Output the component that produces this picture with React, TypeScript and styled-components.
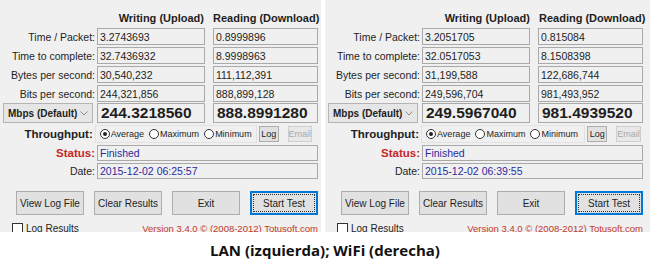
import React from 'react';
import styled, { createGlobalStyle } from 'styled-components';

const Global = createGlobalStyle`
  html, body {
    margin: 0;
    padding: 0;
    background: #ffffff;
  }
  body {
    font-family: 'Liberation Sans', Arial, sans-serif;
  }
`;

const Page = styled.div`
  width: 650px;
  height: 276px;
  display: flex;
  flex-direction: column;
  background: #ffffff;
  overflow: hidden;
`;

const Panels = styled.div`
  display: flex;
  gap: 4px;
  height: 232px;
`;

const Panel = styled.div<{ $width: number }>`
  width: ${(p) => p.$width}px;
  height: 232px;
  background: #f0f0f0;
  overflow: hidden;
  padding-top: 10px;
  box-sizing: border-box;
  display: flex;
  flex-direction: column;
  font-size: 10.5px;
  color: #1e1e1e;
`;

const Row = styled.div<{ $h: number; $top?: number }>`
  display: flex;
  align-items: center;
  height: ${(p) => p.$h}px;
  margin-top: ${(p) => p.$top ?? 2}px;
  flex-shrink: 0;
`;

const Label = styled.div<{ $bold?: boolean; $red?: boolean }>`
  width: 95px;
  margin-right: 2px;
  text-align: right;
  white-space: nowrap;
  font-weight: ${(p) => (p.$bold ? 700 : 400)};
  font-size: ${(p) => (p.$bold ? '11.5px' : '10.5px')};
  color: ${(p) => (p.$red ? '#c62828' : '#1e1e1e')};
`;

const ColHead = styled.div<{ $w: number; $align: 'left' | 'right' }>`
  width: ${(p) => p.$w}px;
  text-align: ${(p) => p.$align};
  font-weight: 700;
  font-size: 11px;
  white-space: nowrap;
  padding-left: ${(p) => (p.$align === 'left' ? '1px' : '0')};
  box-sizing: border-box;
`;

const Box = styled.div<{ $w: number; $big?: boolean; $blue?: boolean }>`
  width: ${(p) => p.$w}px;
  height: 100%;
  box-sizing: border-box;
  border: 1px solid #a9a9a9;
  background: #f0f0f0;
  display: flex;
  align-items: center;
  padding-left: ${(p) => (p.$big ? '3px' : '2px')};
  white-space: nowrap;
  overflow: hidden;
  font-weight: ${(p) => (p.$big ? 700 : 400)};
  font-size: ${(p) => (p.$big ? '15.5px' : '10.5px')};
  color: ${(p) => (p.$blue ? '#2b2b9e' : '#1e1e1e')};
`;

const Spacer = styled.div<{ $w: number }>`
  width: ${(p) => p.$w}px;
  flex-shrink: 0;
`;

const Select = styled.div`
  width: 90px;
  height: 100%;
  margin-left: 3px;
  margin-right: 4px;
  box-sizing: border-box;
  border: 1px solid #b4b4b4;
  background: #e6e6e6;
  display: flex;
  align-items: center;
  justify-content: space-between;
  padding: 0 4px;
  font-weight: 700;
  font-size: 10px;
  white-space: nowrap;
`;

const Caret = styled.svg`
  width: 8px;
  height: 5px;
  flex-shrink: 0;
`;

const RadioGroup = styled.div`
  width: 166px;
  height: 100%;
  box-sizing: border-box;
  border: 1px solid #e2e2e2;
  display: flex;
  align-items: center;
  gap: 5px;
  padding-left: 4px;
  margin-right: 2px;
  overflow: hidden;
`;

const RadioItem = styled.label`
  display: flex;
  align-items: center;
  gap: 1px;
  white-space: nowrap;
  font-size: 9px;
`;

const RadioDot = styled.span<{ $on?: boolean }>`
  width: 10px;
  height: 10px;
  box-sizing: border-box;
  border-radius: 50%;
  border: 1px solid #333333;
  background: #ffffff;
  display: flex;
  align-items: center;
  justify-content: center;
  &::after {
    content: '';
    width: 4px;
    height: 4px;
    border-radius: 50%;
    background: ${(p) => (p.$on ? '#222222' : 'transparent')};
  }
`;

const SmallButton = styled.div<{ $disabled?: boolean }>`
  width: ${(p) => (p.$disabled ? '25px' : '20px')};
  height: 16px;
  box-sizing: border-box;
  border: 1px solid ${(p) => (p.$disabled ? '#cfcfcf' : '#adadad')};
  background: ${(p) => (p.$disabled ? '#e8e8e8' : '#e1e1e1')};
  color: ${(p) => (p.$disabled ? '#a8a8a8' : '#1e1e1e')};
  display: flex;
  align-items: center;
  justify-content: center;
  font-size: 9px;
  margin-right: 9px;
  overflow: hidden;
`;

const ButtonRow = styled.div`
  display: flex;
  gap: 10px;
  margin-top: 12px;
  margin-left: 16px;
  height: 24px;
  flex-shrink: 0;
`;

const Button = styled.div<{ $focused?: boolean }>`
  width: 68px;
  height: 24px;
  box-sizing: border-box;
  border: 1px solid ${(p) => (p.$focused ? '#0078d7' : '#adadad')};
  box-shadow: ${(p) => (p.$focused ? 'inset 0 0 0 1px #0078d7' : 'none')};
  background: #e1e1e1;
  display: flex;
  align-items: center;
  justify-content: center;
  font-size: 10px;
  white-space: nowrap;
  position: relative;
  &::after {
    content: '';
    display: ${(p) => (p.$focused ? 'block' : 'none')};
    position: absolute;
    inset: 2px;
    border: 1px dotted #333333;
  }
`;

const Footer = styled.div`
  display: flex;
  align-items: center;
  justify-content: space-between;
  margin-top: 7px;
  margin-left: 12px;
  width: 306px;
  height: 12px;
  flex-shrink: 0;
`;

const CheckLabel = styled.div`
  display: flex;
  align-items: center;
  gap: 3px;
  font-size: 10px;
`;

const CheckBox = styled.span`
  width: 11px;
  height: 11px;
  box-sizing: border-box;
  border: 1px solid #333333;
  background: #ffffff;
`;

const Version = styled.div`
  color: #c0392b;
  font-size: 9.5px;
  white-space: nowrap;
`;

const Caption = styled.div`
  flex: 1;
  display: flex;
  justify-content: center;
  padding-top: 8px;
  font-family: 'Open Sans', 'Noto Sans', sans-serif;
  font-weight: 700;
  font-size: 15px;
  color: #111111;
`;

type Result = {
  width: number;
  rows: [string, string, string][];
  writeMbps: string;
  readMbps: string;
  date: string;
};

const results: Result[] = [
  {
    width: 321,
    rows: [
      ['Time / Packet:', '3.2743693', '0.8999896'],
      ['Time to complete:', '32.7436932', '8.9998963'],
      ['Bytes per second:', '30,540,232', '111,112,391'],
      ['Bits per second:', '244,321,856', '888,899,128'],
    ],
    writeMbps: '244.3218560',
    readMbps: '888.8991280',
    date: '2015-12-02 06:25:57',
  },
  {
    width: 325,
    rows: [
      ['Time / Packet:', '3.2051705', '0.815084'],
      ['Time to complete:', '32.0517053', '8.1508398'],
      ['Bytes per second:', '31,199,588', '122,686,744'],
      ['Bits per second:', '249,596,704', '981,493,952'],
    ],
    writeMbps: '249.5967040',
    readMbps: '981.4939520',
    date: '2015-12-02 06:39:55',
  },
];

const TestPanel = ({ data }: { data: Result }) => (
  <Panel $width={data.width}>
    <Row $h={16} $top={0}>
      <Spacer $w={97} />
      <ColHead $w={108} $align="right">Writing (Upload)</ColHead>
      <Spacer $w={8} />
      <ColHead $w={110} $align="left">Reading (Download)</ColHead>
    </Row>
    {data.rows.map(([label, w, r]) => (
      <Row key={label} $h={17}>
        <Label>{label}</Label>
        <Box $w={108}>{w}</Box>
        <Spacer $w={8} />
        <Box $w={105}>{r}</Box>
      </Row>
    ))}
    <Row $h={20} $top={1}>
      <Select>
        Mbps (Default)
        <Caret viewBox="0 0 8 5">
          <path d="M0.5 0.5 L4 4 L7.5 0.5" fill="none" stroke="#8a8a8a" strokeWidth="1" />
        </Caret>
      </Select>
      <Box $w={108} $big>{data.writeMbps}</Box>
      <Spacer $w={8} />
      <Box $w={105} $big>{data.readMbps}</Box>
    </Row>
    <Row $h={18}>
      <Label $bold>Throughput:</Label>
      <RadioGroup>
        <RadioItem><RadioDot $on />Average</RadioItem>
        <RadioItem><RadioDot />Maximum</RadioItem>
        <RadioItem><RadioDot />Minimum</RadioItem>
      </RadioGroup>
      <SmallButton>Log</SmallButton>
      <SmallButton $disabled>Email</SmallButton>
    </Row>
    <Row $h={16}>
      <Label $bold $red>Status:</Label>
      <Box $w={221} $blue>Finished</Box>
    </Row>
    <Row $h={16}>
      <Label>Date:</Label>
      <Box $w={221} $blue>{data.date}</Box>
    </Row>
    <ButtonRow>
      <Button>View Log File</Button>
      <Button>Clear Results</Button>
      <Button>Exit</Button>
      <Button $focused>Start Test</Button>
    </ButtonRow>
    <Footer>
      <CheckLabel><CheckBox />Log Results</CheckLabel>
      <Version>Version 3.4.0  © (2008-2012) Totusoft.com</Version>
    </Footer>
  </Panel>
);

const App = () => (
  <Page>
    <Global />
    <Panels>
      {results.map((r) => (
        <TestPanel key={r.date} data={r} />
      ))}
    </Panels>
    <Caption>LAN (izquierda); WiFi (derecha)</Caption>
  </Page>
);

export default App;
